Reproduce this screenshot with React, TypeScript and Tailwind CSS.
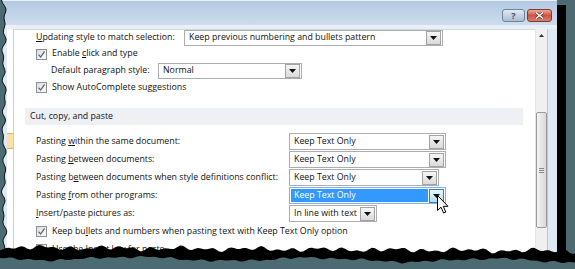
import clsx from "clsx";

// jagged "torn paper" edge, deterministic
const noise = (t: number, s: number) =>
  Math.sin(t * 1.7 + s) * 1.3 + Math.sin(t * 4.1 + s * 2) * 0.9 + Math.sin(t * 0.23 + s) * 1.1;

const tear = () => {
  const top: string[] = [];
  const low: string[] = [];
  for (let x = 0; x <= 576; x += 3) {
    top.push(`${x} ${(247.5 + x * 0.006 + noise(x, 1)).toFixed(1)}`);
    low.push(`${x} ${(258 + x * 0.005 + 1.8 * Math.sin(x * 0.035) + noise(x, 3) * 0.5).toFixed(1)}`);
  }
  const left: string[] = [];
  for (let y = 0; y <= 262; y += 3) left.push(`${(4 + noise(y, 5) * 0.9).toFixed(1)} ${y}`);
  return {
    black: `M${top.join(" L")} L576 269 L0 269 Z`,
    teal: `M${low.join(" L")} L576 269 L0 269 Z`,
    left: `M0 0 L${left.join(" L")} L0 262 Z`,
    leftLine: `M${left.join(" L")}`,
  };
};

const Arrow = () => (
  <svg width="7" height="4" viewBox="0 0 7 4">
    <path d="M0 0H7L3.5 4Z" fill="#111" />
  </svg>
);

type SelectProps = { value: string; className: string; active?: boolean };

const Select = ({ value, className, active = false }: SelectProps) => (
  <div
    className={clsx(
      "flex items-center border bg-white pr-px",
      active ? "border-[#7eb4ea]" : "border-[#abadb3]",
      className
    )}
  >
    <div className="flex h-full flex-1 items-center p-px">
      <span className={clsx("flex h-full w-full items-center pl-[3px]", active && "bg-[#3399ff] text-white")}>
        {value}
      </span>
    </div>
    <div
      className={clsx(
        "flex h-[14px] w-[15px] items-center justify-center border",
        active
          ? "border-[#3c7fb1] bg-linear-to-b from-[#eaf6fd] to-[#b2dcf3]"
          : "border-[#a3a3a3] bg-linear-to-b from-[#f6f6f6] to-[#dadada]"
      )}
    >
      <Arrow />
    </div>
  </div>
);

const Check = ({ checked }: { checked: boolean }) => (
  <div className="flex h-[11px] w-[11px] shrink-0 items-center justify-center border border-[#8e8f8f] bg-linear-to-br from-[#dcdcdc] to-[#fdfdfd]">
    {checked && (
      <svg width="9" height="9" viewBox="0 0 9 9">
        <path d="M1.6 4.6L3.6 7.1L7.6 1.4" stroke="#4d5e8a" strokeWidth="1.2" fill="none" />
      </svg>
    )}
  </div>
);

const Cursor = () => (
  <svg width="12" height="19" viewBox="0 0 12 19" className="absolute left-[437px] top-[195px]">
    <path d="M0.5 0.5V15.5L4 12.2L6.6 18L8.8 17L6.3 11.3H11Z" fill="#fff" stroke="#000" strokeWidth="1" />
  </svg>
);

export default function App() {
  const t = tear();

  return (
    <div className="relative h-[269px] w-[575px] overflow-hidden bg-[#4c6a72] font-['Open_Sans',sans-serif] text-[8.8px] text-[#111]">
      <div className="flex h-[262px] w-[557px] flex-col bg-[#dfe8f3] shadow-[9px_5px_0_#000]">
        {/* title bar */}
        <div className="flex h-[25px] items-start justify-end gap-[2px] border-t border-[#e8eef5] bg-linear-to-b from-[#b3c9e2] to-[#cddcee] pr-[5px] pt-[8px]">
          <div className="flex h-[13px] w-[23px] items-center justify-center rounded-[3px] border border-[#6f829a] bg-linear-to-b from-[#e2ebf5] to-[#a9bdd5] text-[9px] font-bold leading-none text-[#3f5068]">
            ?
          </div>
          <div className="flex h-[13px] w-[25px] items-center justify-center rounded-[3px] border border-[#7e3a32] bg-linear-to-b from-[#eba99b] via-[#cc5440] to-[#d8806f]">
            <svg width="9" height="7" viewBox="0 0 9 7">
              <path d="M1 0.5L8 6.5M8 0.5L1 6.5" stroke="#5a1d16" strokeWidth="2.6" />
              <path d="M1 0.5L8 6.5M8 0.5L1 6.5" stroke="#fff" strokeWidth="1.6" />
            </svg>
          </div>
        </div>
        <div className="h-[4px] bg-[#eaeff5]" />

        <div className="flex min-h-0 flex-1">
          <div className="w-[7px] bg-[#dfe8f3]" />
          {/* sliver of the category list */}
          <div className="flex w-[7px] flex-col border-r border-[#c5cfd9] bg-white">
            <div className="h-[104px]" />
            <div className="h-[16px] border-y border-[#e5b54c] bg-[#fbe1a3]" />
          </div>

          {/* options pane */}
          <div className="flex w-[521px] flex-col border-t border-[#cfd8e1] bg-white">
            <div className="flex h-[16px] items-center pl-[22px]">
              <span className="w-[148px]">
                <span className="underline">U</span>pdating style to match selection:
              </span>
              <Select value="Keep previous numbering and bullets pattern" className="h-[16px] w-[259px]" />
            </div>
            <div className="flex h-[16px] items-center gap-[5px] pl-[22px]">
              <Check checked />
              <span>
                Enable <span className="underline">c</span>lick and type
              </span>
            </div>
            <div className="flex h-[17px] items-center pl-[37px]">
              <span className="w-[107px]">Default paragraph style:</span>
              <Select value="Normal" className="h-[16px] w-[144px]" />
            </div>
            <div className="flex h-[17px] items-center gap-[5px] pl-[22px]">
              <Check checked />
              <span>Show AutoComplete suggestions</span>
            </div>

            <div className="ml-[11px] mt-[12px] flex h-[17px] w-[498px] items-center bg-[#eef0f4] pl-[5px]">
              Cut, copy, and paste
            </div>

            <div className="mt-[8px] flex h-[17px] items-center pl-[22px]">
              <span className="w-[253px]">
                Pasting <span className="underline">w</span>ithin the same document:
              </span>
              <Select value="Keep Text Only" className="h-[17px] w-[157px]" />
            </div>
            <div className="mt-px flex h-[17px] items-center pl-[22px]">
              <span className="w-[253px]">
                Pasting <span className="underline">b</span>etween documents:
              </span>
              <Select value="Keep Text Only" className="h-[17px] w-[157px]" />
            </div>
            <div className="mt-px flex h-[17px] items-center pl-[22px]">
              <span className="w-[253px]">
                Pasting b<span className="underline">e</span>tween documents when style definitions conflict:
              </span>
              <Select value="Keep Text Only" className="h-[17px] w-[150px]" />
            </div>
            <div className="mt-px flex h-[17px] items-center pl-[22px]">
              <span className="w-[253px]">
                Pasting <span className="underline">f</span>rom other programs:
              </span>
              <Select value="Keep Text Only" className="h-[17px] w-[157px]" active />
            </div>
            <div className="mt-px flex h-[17px] items-center pl-[22px]">
              <span className="w-[253px]">
                <span className="underline">I</span>nsert/paste pictures as:
              </span>
              <Select value="In line with text" className="h-[17px] w-[88px]" />
            </div>
            <div className="mt-px flex h-[17px] items-center gap-[5px] pl-[22px]">
              <Check checked />
              <span>
                Keep bu<span className="underline">l</span>lets and numbers when pasting text with Keep Text Only option
              </span>
            </div>
            <div className="mt-px flex h-[17px] items-center gap-[5px] pl-[22px]">
              <Check checked={false} />
              <span>Use the Insert key for paste</span>
            </div>
          </div>

          {/* scrollbar */}
          <div className="flex w-[12px] flex-col items-center border-l border-[#e6e6e6] bg-[#f0f0f0]">
            <div className="flex h-[12px] items-center justify-center">
              <svg width="5" height="3" viewBox="0 0 5 3">
                <path d="M0 3H5L2.5 0Z" fill="#333" />
              </svg>
            </div>
            <div className="h-[71px]" />
            <div className="flex h-[116px] w-[11px] flex-col items-center justify-center gap-px rounded-[2px] border border-[#9a9a9a] bg-linear-to-r from-[#f3f3f3] to-[#d9d9d9]">
              <div className="h-px w-[5px] bg-[#8a8a8a]" />
              <div className="h-px w-[5px] bg-[#8a8a8a]" />
              <div className="h-px w-[5px] bg-[#8a8a8a]" />
            </div>
          </div>
          <div className="w-[10px] border-l border-[#b9c7d6] bg-[#dfe8f3]" />
        </div>
      </div>

      <Cursor />

      {/* torn edges */}
      <svg width="575" height="269" viewBox="0 0 575 269" className="pointer-events-none absolute left-0 top-0">
        <path d={t.left} fill="#4c6a72" />
        <path d={t.leftLine} stroke="#111" strokeWidth="1" fill="none" />
        <path d={t.black} fill="#000" />
        <path d={t.teal} fill="#4c6a72" />
      </svg>
    </div>
  );
}
